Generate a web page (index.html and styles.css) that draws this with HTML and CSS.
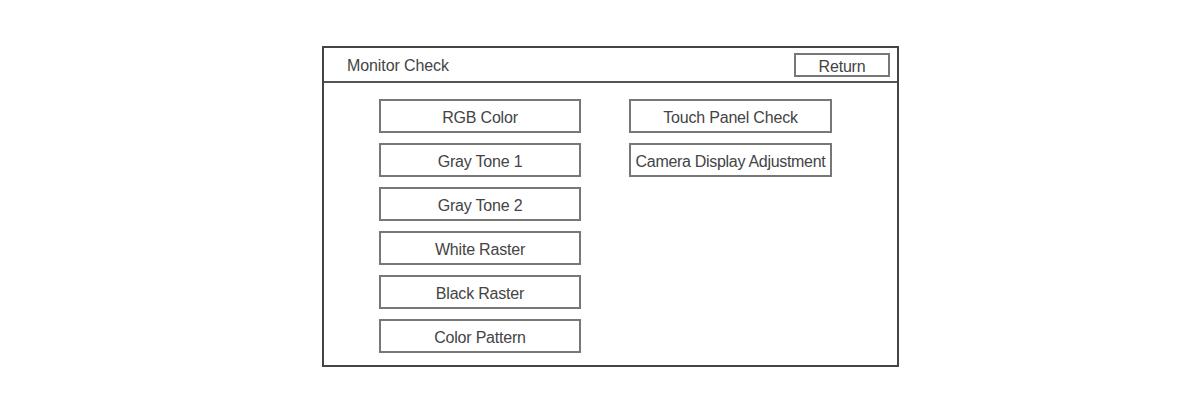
FILE: index.html
```html
<!DOCTYPE html>
<html lang="en">
<head>
    <meta charset="UTF-8" />
    <title>Monitor Check</title>
    <link rel="stylesheet" href="styles.css">
</head>
<body>
<div class="page">
    <div class="screen">
        <div class="head">
            <span class="title">Monitor Check</span>
            <a href="#" class="btn return">Return</a>
        </div>
        <div class="menu">
            <div class="col">
                <a href="#" class="btn">RGB Color</a>
                <a href="#" class="btn">Gray Tone 1</a>
                <a href="#" class="btn">Gray Tone 2</a>
                <a href="#" class="btn">White Raster</a>
                <a href="#" class="btn">Black Raster</a>
                <a href="#" class="btn">Color Pattern</a>
            </div>
            <div class="col">
                <a href="#" class="btn">Touch Panel Check</a>
                <a href="#" class="btn narrow">Camera Display Adjustment</a>
            </div>
        </div>
    </div>
</div>
</body>
</html>
```

FILE: styles.css
```css
* {margin:0; padding:0; box-sizing: border-box;}
body {
    background: #fff;
    font-family: "Liberation Sans", Arial, sans-serif;
    color: #444;
}
.page {
    padding: 46px 0 0 322px;
}
.screen {
    width: 577px;
    height: 321px;
    border: 2px solid #444;
}
.head {
    height: 35px;
    border-bottom: 2px solid #555;
    display: flex;
    align-items: center;
    justify-content: space-between;
    padding: 0 7px 0 23px;
}
.title {
    font-size: 16px;
    letter-spacing: -0.1px;
    padding-top: 3px;
}
.btn {
    display: flex;
    align-items: center;
    justify-content: center;
    height: 34px;
    padding-top: 3px;
    border: 2px solid #777;
    color: #444;
    text-decoration: none;
    font-size: 16px;
    letter-spacing: -0.2px;
    white-space: nowrap;
}
.btn.return {
    width: 96px;
    height: 24px;
    margin-top: 1px;
}
.btn.narrow {
    letter-spacing: -0.3px;
}
.menu {
    display: flex;
    gap: 48px;
    padding: 16px 0 0 55px;
}
.col {
    display: flex;
    flex-direction: column;
    gap: 10px;
    width: 202px;
}
.col + .col {
    width: 203px;
}
```
